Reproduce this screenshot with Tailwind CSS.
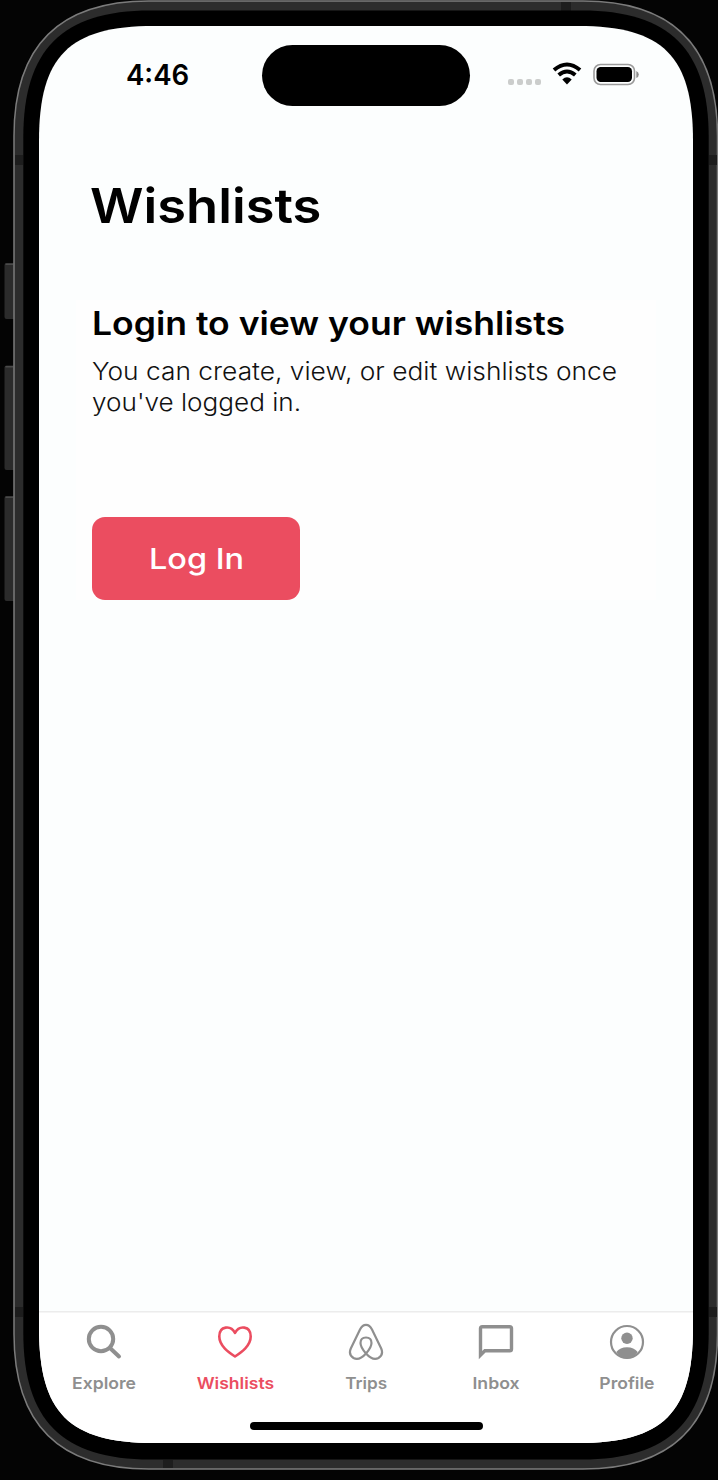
<!DOCTYPE html>
<html lang="en">
<head>
<meta charset="utf-8">
<meta name="viewport" content="width=device-width, initial-scale=1">
<title>Wishlists</title>
<script src="https://cdn.jsdelivr.net/npm/@tailwindcss/browser@4"></script>
</head>
<body class="bg-[#040404]">
<div class="relative h-[1480px] w-[718px] overflow-hidden font-['Inter','Liberation_Sans',sans-serif] text-black">

  <!-- Device frame -->
  <svg class="absolute inset-0" width="718" height="1480" viewBox="0 0 718 1480" aria-hidden="true">
    <defs>
      <clipPath id="screen"><path d="M39 141C39 56 69 26 154 26H578C663 26 693 56 693 141V1328C693 1413 663 1443 578 1443H154C69 1443 39 1413 39 1328Z"/></clipPath>
    </defs>
    <g fill="#2b2b2b">
      <rect x="4.500" y="263" width="12" height="56" rx="2"/>
      <rect x="4.500" y="365.500" width="12" height="104.500" rx="2"/>
      <rect x="4.500" y="496" width="12" height="105" rx="2"/>
    </g>
    <path d="M5.500 264.300H13M5.500 366.800H13M5.500 497.300H13" stroke="#4a4a4a" stroke-width="1.500"/>
    <path d="M14 136C14 46 59 1 149 1H583C673 1 717.500 46 717.500 136V1334C717.500 1424 673 1469 583 1469H149C59 1469 14 1424 14 1334Z" fill="#2c2c2c" stroke="#7b7b7b" stroke-width="1.500"/>
    <path d="M15 155H23V165H15ZM709 155H717V165H709ZM15 1307H23V1317H15ZM709 1307H717V1317H709ZM561 2H571V11H561ZM163 1460H173V1468H163Z" fill="#1d1d1d"/>
    <path d="M23.300 137.500C23.300 49.500 62.300 10.500 150.300 10.500H581.700C669.700 10.500 708.700 49.500 708.700 137.500V1332.500C708.700 1420.500 669.700 1459.500 581.700 1459.500H150.300C62.300 1459.500 23.300 1420.500 23.300 1332.500Z"/>
    <g clip-path="url(#screen)">
      <rect x="39" y="26" width="654" height="1417" fill="#fcfefe"/>
      <rect x="76" y="300" width="580" height="300" fill="#fefefe"/>
      <rect x="39" y="1312" width="654" height="131" fill="#fff"/>
      <rect x="39" y="1311" width="654" height="1.500" fill="#ececec"/>
    </g>
  </svg>

  <div class="relative ml-[39px] flex h-[1443px] w-[654px] flex-col pt-[26px]">
    <!-- Status bar -->
    <header class="flex h-24 shrink-0 items-center pt-[2px] pr-[54px] pl-[87px]">
      <span class="w-[136px] text-[28px] leading-none font-semibold"><span class="inline-block origin-left scale-x-[0.985] whitespace-nowrap">4:46</span></span>
      <div class="h-[61px] w-[208px] rounded-full bg-black"></div>
      <svg class="ml-auto" width="131" height="30" viewBox="0 0 131 30" aria-label="Status">
        <g fill="#cbcdcc"><rect x="0" y="19" width="6" height="6" rx="2"/><rect x="9" y="19" width="6" height="6" rx="2"/><rect x="18" y="19" width="6" height="6" rx="2"/><rect x="27" y="19" width="6" height="6" rx="2"/></g>
        <g fill="none" stroke="#000" stroke-width="4"><path d="M46 10Q59 -1 72 10"/><path d="M50.700 15Q59 8 67.300 15"/></g>
        <path d="M54.300 19.500Q59 15 63.700 19.500L59 24.500Z"/>
        <rect x="86" y="4.500" width="40.500" height="20" rx="6.500" fill="none" stroke="#9b9b9b" stroke-width="1.600"/>
        <rect x="88.500" y="7" width="35.500" height="15" rx="4.200"/>
        <path d="M128.300 11Q130.800 12 130.800 14.500T128.300 18Z" fill="#8d8d8d"/>
      </svg>
    </header>

    <main class="flex grow flex-col items-start pl-[52px]">
      <h1 class="mt-[52px] -ml-[1px] h-[64px] origin-left scale-x-[1.093] text-[48px] leading-[64px] font-semibold whitespace-nowrap">Wishlists</h1>
      <h2 class="mt-[65px] ml-[1px] h-[41px] origin-left scale-x-[1.11] text-[32px] leading-[42px] font-semibold whitespace-nowrap">Login to view your wishlists</h2>
      <p class="mt-[13px] ml-[1px] origin-left scale-x-[1.097] text-[24px] leading-[30.500px] font-[350] whitespace-nowrap text-[#111]">You can create, view, or edit wishlists once<br><span class="inline-block origin-left scale-x-[0.992]">you've logged in.</span></p>
      <button class="mt-[99px] ml-[1px] flex h-[83px] w-[208px] items-center justify-center rounded-[13px] bg-[#eb4d60] text-[29px] font-medium text-white"><span class="scale-x-[1.12]">Log In</span></button>
    </main>

    <!-- Tab bar -->
    <nav class="grid h-[131px] shrink-0 grid-cols-5 pt-[10px] pr-[1px] text-[16.500px] leading-5 font-semibold text-[#8f8f8f]">
      <a class="flex flex-col items-center gap-[11px]">
        <svg width="40" height="40" viewBox="0 0 40 40" fill="none" stroke="currentColor" stroke-width="4" stroke-linecap="round"><circle cx="17" cy="17" r="12.200"/><path d="M26 26L35 34.500"/></svg>
        <span class="scale-x-[1.065]">Explore</span></a>
      <a class="flex flex-col items-center gap-[11px] text-[#eb4d60]">
        <svg width="40" height="40" viewBox="0 0 40 40" fill="none" stroke="currentColor" stroke-width="2.600" stroke-linejoin="round"><path d="M20 11C16 3 4.300 3.500 4.300 14.500C4.300 24 14 30.500 20 34.500C26 30.500 35.700 24 35.700 14.500C35.700 3.500 24 3 20 11Z"/></svg>
        <span class="scale-x-[1.065]">Wishlists</span></a>
      <a class="flex flex-col items-center gap-[11px] pl-[1.500px]">
        <svg width="40" height="40" viewBox="0 0 40 40" fill="none" stroke="currentColor" stroke-width="2.200" stroke-linejoin="round"><path d="M20 31.500C16 27 14.500 24 14.500 21C14.500 17.500 16.500 15.500 20 15.500S25.500 17.500 25.500 21C25.500 24 24 27 20 31.500C15.500 36.500 11 38 7.500 36C3.500 33.500 3.300 30 4.800 26.500L14 7.500C15.500 4.500 17 2.800 20 2.800S24.500 4.500 26 7.500L35.200 26.500C36.700 30 36.500 33.500 32.500 36C29 38 24.500 36.500 20 31.500Z"/></svg>
        <span class="scale-x-[1.04]">Trips</span></a>
      <a class="flex flex-col items-center gap-[11px]">
        <svg width="40" height="40" viewBox="0 0 40 40" fill="currentColor" fill-rule="evenodd"><path d="M6.300 3H33.700Q37.200 3 37.200 6.500V27Q37.200 30.500 33.700 30.500H9.500L2.800 37.200V6.500Q2.800 3 6.300 3ZM6.200 6.400V29L8.200 27.100H33.800V6.400Z"/></svg>
        <span class="scale-x-[1.07]">Inbox</span></a>
      <a class="flex flex-col items-center gap-[11px]">
        <svg width="40" height="40" viewBox="0 0 40 40" fill="currentColor"><circle cx="20" cy="20" r="16" fill="none" stroke="currentColor" stroke-width="2.200"/><circle cx="20" cy="16.300" r="5.700"/><path d="M9.300 30Q13 25.200 20 25.200T30.700 30Q27 36.500 20 36.500T9.300 30Z"/></svg>
        <span class="scale-x-[1.065]">Profile</span></a>
    </nav>
    <div class="absolute bottom-[13.500px] left-[211px] h-2 w-[233px] rounded-full bg-black"></div>
  </div>
</div>
</body>
</html>
